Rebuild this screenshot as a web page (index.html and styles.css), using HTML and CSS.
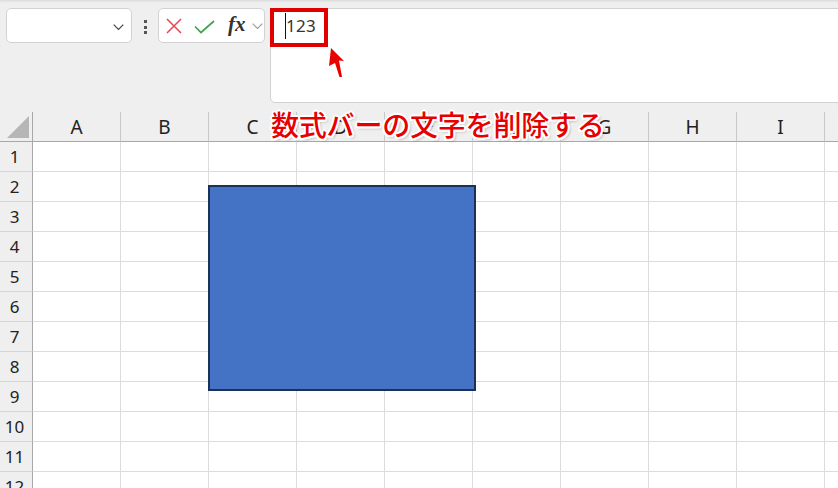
FILE: index.html
```html
<!DOCTYPE html>
<html lang="ja">
<head>
<meta charset="utf-8">
<title>Excel formula bar</title>
<link rel="stylesheet" href="styles.css">
</head>
<body>
<div class="app">
  <div class="toolbar">
    <div class="namebox">
      <svg class="nb-chev" width="11" height="7" viewBox="0 0 11 7"><polyline points="0.7,0.7 5.5,5.5 10.3,0.7" fill="none" stroke="#444" stroke-width="1.2"/></svg>
    </div>
    <div class="dots"><span></span><span></span><span></span></div>
    <div class="fbtns">
      <svg class="ico-x" width="16" height="16" viewBox="0 0 16 16"><path d="M1 1 L15 15 M15 1 L1 15" stroke="#e8464e" stroke-width="1.5" fill="none"/></svg>
      <svg class="ico-ok" width="21" height="14" viewBox="0 0 21 14"><polyline points="1,6.5 7,12.5 20,1" fill="none" stroke="#3fa34d" stroke-width="1.7"/></svg>
      <span class="fx">fx</span>
      <svg class="fx-chev" width="11" height="7" viewBox="0 0 11 7"><polyline points="0.7,0.7 5.5,5.5 10.3,0.7" fill="none" stroke="#9a9a9a" stroke-width="1.1"/></svg>
    </div>
    <div class="finput"><span class="caret"></span><span class="fval">123</span></div>
  </div>

  <div class="sheet">
    <div class="grid">
      <div class="corner"><svg width="33" height="30" viewBox="0 0 33 30"><polygon points="29,4 29,26 7,26" fill="#b6b6b6"/></svg></div>
      <div class="ch">A</div><div class="ch">B</div><div class="ch">C</div><div class="ch">D</div><div class="ch">E</div><div class="ch">F</div><div class="ch">G</div><div class="ch">H</div><div class="ch">I</div><div class="ch"></div>

      <div class="rh">1</div><div class="c"></div><div class="c"></div><div class="c"></div><div class="c"></div><div class="c"></div><div class="c"></div><div class="c"></div><div class="c"></div><div class="c"></div><div class="c"></div>
      <div class="rh">2</div><div class="c"></div><div class="c"></div><div class="c"></div><div class="c"></div><div class="c"></div><div class="c"></div><div class="c"></div><div class="c"></div><div class="c"></div><div class="c"></div>
      <div class="rh">3</div><div class="c"></div><div class="c"></div><div class="c"></div><div class="c"></div><div class="c"></div><div class="c"></div><div class="c"></div><div class="c"></div><div class="c"></div><div class="c"></div>
      <div class="rh">4</div><div class="c"></div><div class="c"></div><div class="c"></div><div class="c"></div><div class="c"></div><div class="c"></div><div class="c"></div><div class="c"></div><div class="c"></div><div class="c"></div>
      <div class="rh">5</div><div class="c"></div><div class="c"></div><div class="c"></div><div class="c"></div><div class="c"></div><div class="c"></div><div class="c"></div><div class="c"></div><div class="c"></div><div class="c"></div>
      <div class="rh">6</div><div class="c"></div><div class="c"></div><div class="c"></div><div class="c"></div><div class="c"></div><div class="c"></div><div class="c"></div><div class="c"></div><div class="c"></div><div class="c"></div>
      <div class="rh">7</div><div class="c"></div><div class="c"></div><div class="c"></div><div class="c"></div><div class="c"></div><div class="c"></div><div class="c"></div><div class="c"></div><div class="c"></div><div class="c"></div>
      <div class="rh">8</div><div class="c"></div><div class="c"></div><div class="c"></div><div class="c"></div><div class="c"></div><div class="c"></div><div class="c"></div><div class="c"></div><div class="c"></div><div class="c"></div>
      <div class="rh">9</div><div class="c"></div><div class="c"></div><div class="c"></div><div class="c"></div><div class="c"></div><div class="c"></div><div class="c"></div><div class="c"></div><div class="c"></div><div class="c"></div>
      <div class="rh">10</div><div class="c"></div><div class="c"></div><div class="c"></div><div class="c"></div><div class="c"></div><div class="c"></div><div class="c"></div><div class="c"></div><div class="c"></div><div class="c"></div>
      <div class="rh">11</div><div class="c"></div><div class="c"></div><div class="c"></div><div class="c"></div><div class="c"></div><div class="c"></div><div class="c"></div><div class="c"></div><div class="c"></div><div class="c"></div>
      <div class="rh">12</div><div class="c"></div><div class="c"></div><div class="c"></div><div class="c"></div><div class="c"></div><div class="c"></div><div class="c"></div><div class="c"></div><div class="c"></div><div class="c"></div>
    </div>
    <div class="shape"></div>
  </div>

  <div class="hl-box"></div>
  <svg class="hl-arrow" width="24" height="40" viewBox="0 0 24 40"><polygon points="6,4 19,17 14,16.5 17,33 14.5,33 10,19 4,22" fill="#e60000"/></svg>
  <div class="note">数式バーの文字を削除する</div>
</div>
</body>
</html>
```

FILE: styles.css
```css
html, body {
  margin: 0;
  padding: 0;
}
body {
  width: 838px;
  height: 488px;
  overflow: hidden;
  background: #ffffff;
  font-family: "Noto Sans", "Noto Sans CJK JP", sans-serif;
}
.app {
  position: relative;
  width: 838px;
  height: 488px;
  overflow: hidden;
}

/* ---------- toolbar ---------- */
.toolbar {
  height: 112px;
  box-sizing: border-box;
  background: #efefef;
  box-shadow: inset 0 3px 3px -2px #d6d6d6;
  display: flex;
  align-items: flex-start;
  padding: 8px 0 0 6px;
}
.toolbar > * {
  flex-shrink: 0;
}
.namebox {
  width: 126px;
  height: 35px;
  box-sizing: border-box;
  background: #fff;
  border: 1px solid #d2d2d2;
  border-radius: 5px;
  display: flex;
  justify-content: flex-end;
  align-items: center;
  padding: 4px 7px 0 0;
}
.dots {
  width: 3px;
  margin: 12px 0 0 12px;
  display: flex;
  flex-direction: column;
  gap: 2.5px;
}
.dots span {
  width: 3px;
  height: 3px;
  background: #555;
}
.fbtns {
  margin-left: 11px;
  width: 107px;
  height: 35px;
  box-sizing: border-box;
  background: #fff;
  border: 1px solid #d2d2d2;
  border-radius: 5px;
  display: flex;
  align-items: center;
  padding: 0 0 0 7px;
}
.ico-x { margin-top: 1px; }
.ico-ok { margin-left: 12px; margin-top: 2px; }
.fx {
  margin-left: 13px;
  font-family: "Liberation Serif", "DejaVu Serif", serif;
  font-style: italic;
  font-weight: 700;
  font-size: 21px;
  color: #333;
  line-height: 1;
  margin-top: -2px;
}
.fx-chev { margin-left: 6px; margin-top: 1px; }
.finput {
  margin-left: 5px;
  width: 590px;
  height: 95px;
  box-sizing: border-box;
  background: #fff;
  border: 1px solid #d2d2d2;
  border-radius: 5px;
  padding: 4px 0 0 14px;
  display: flex;
  align-items: flex-start;
}
.caret {
  width: 1px;
  height: 26px;
  background: #111;
}
.fval {
  font-family: "Noto Sans", sans-serif;
  font-size: 17px;
  line-height: 26px;
  color: #333;
  letter-spacing: 0.3px;
}

/* ---------- sheet ---------- */
.sheet {
  position: relative;
}
.grid {
  display: grid;
  grid-template-columns: 33px repeat(10, 88px);
  grid-auto-rows: 30px;
}
.grid > div {
  box-sizing: border-box;
}
.corner {
  background: #efefef;
  border-right: 1px solid #a8a8a8;
  border-bottom: 1px solid #a8a8a8;
}
.corner svg { display: block; }
.ch {
  background: #efefef;
  border-right: 1px solid #c8c8c8;
  border-bottom: 1px solid #a8a8a8;
  display: flex;
  align-items: center;
  justify-content: center;
  font-size: 19px;
  color: #222;
  padding-top: 1px;
}
.rh {
  background: #efefef;
  border-right: 1px solid #a8a8a8;
  border-bottom: 1px solid #d6d6d6;
  display: flex;
  align-items: center;
  justify-content: center;
  font-size: 17px;
  color: #222;
  padding-right: 3px;
}
.c {
  background: #fff;
  border-right: 1px solid #dcdcdc;
  border-bottom: 1px solid #dcdcdc;
}
.shape {
  position: absolute;
  left: 208px;
  top: 73px;
  width: 268px;
  height: 206px;
  box-sizing: border-box;
  background: #4472c4;
  border: 2px solid #1c3158;
}

/* ---------- annotations ---------- */
.hl-box {
  position: absolute;
  left: 270px;
  top: 8px;
  width: 58px;
  height: 39px;
  box-sizing: border-box;
  border: 4px solid #e00000;
}
.hl-arrow {
  position: absolute;
  left: 325px;
  top: 44px;
}
.note {
  position: absolute;
  left: 271px;
  top: 109px;
  font-family: "Noto Sans CJK JP", sans-serif;
  font-weight: 500;
  font-size: 28px;
  line-height: 30px;
  letter-spacing: -0.2px;
  color: #e60000;
  white-space: nowrap;
  text-shadow:
    2px 0 0 #fff, -2px 0 0 #fff, 0 2px 0 #fff, 0 -2px 0 #fff,
    1.5px 1.5px 0 #fff, -1.5px 1.5px 0 #fff, 1.5px -1.5px 0 #fff, -1.5px -1.5px 0 #fff,
    2px 2px 3px rgba(0, 0, 0, 0.35);
}
```
